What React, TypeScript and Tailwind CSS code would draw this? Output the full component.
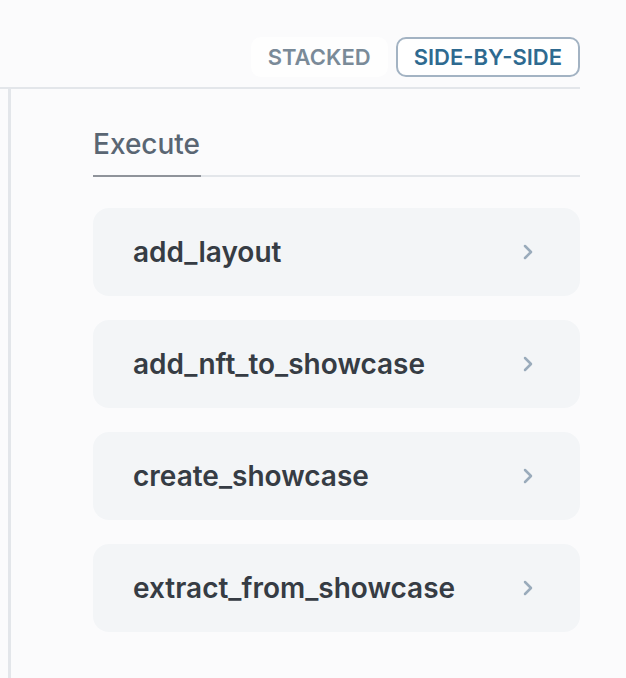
import { ChevronRight } from "lucide-react";

const functions = [
  "add_layout",
  "add_nft_to_showcase",
  "create_showcase",
  "extract_from_showcase",
];

export default function App() {
  return (
    <div className="min-h-[678px] w-[626px] bg-[#fbfbfc] font-['Inter',sans-serif]">
      <div className="w-[580px]">
        {/* View toggle */}
        <div className="flex h-[89px] items-start justify-end gap-2 border-b-2 border-[#e3e6ea] pt-[37px]">
          <button className="flex h-10 items-center rounded-[10px] bg-[#fefefe] px-[17px] text-[22px] font-semibold text-[#7a8a98]">
            STACKED
          </button>
          <button className="flex h-10 items-center rounded-[10px] border-2 border-[#a3b3c3] bg-white px-4 text-[22px] font-semibold text-[#2e6a90]">
            SIDE-BY-SIDE
          </button>
        </div>

        <div className="flex">
          <div className="ml-2 w-[3px] self-stretch bg-[#e3e6ea]" />
          <div className="ml-[82px] flex min-h-[589px] flex-1 flex-col pt-[39px]">
            {/* Tabs */}
            <div className="flex border-b-2 border-[#e3e6ea]">
              <div className="-mb-[2px] border-b-2 border-[#8f939a] pb-[15px] pr-[1px] text-[28px] font-medium leading-[32px] text-[#5a6673]">
                Execute
              </div>
            </div>

            {/* Function list */}
            <div className="mt-[31px] flex flex-col gap-6">
              {functions.map((name) => (
                <div
                  key={name}
                  className="flex h-[88px] items-center justify-between rounded-2xl bg-[#f3f5f7] pl-10 pr-10"
                >
                  <span className="text-[28px] font-semibold text-[#363c44]">{name}</span>
                  <ChevronRight className="h-6 w-6 text-[#9aabbb]" strokeWidth={2.5} />
                </div>
              ))}
            </div>
          </div>
        </div>
      </div>
    </div>
  );
}
